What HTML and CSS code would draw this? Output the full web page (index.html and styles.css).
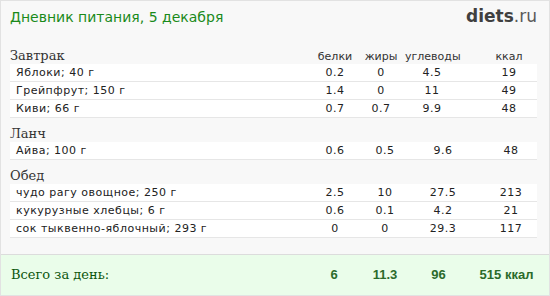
FILE: index.html
```html
<!DOCTYPE html>
<html lang="ru">
<head>
<meta charset="utf-8">
<title>Дневник питания</title>
<link rel="stylesheet" href="styles.css">
</head>
<body>
<div class="page">
  <header class="top">
    <h1 class="title">Дневник питания, 5 декабря</h1>
    <div class="logo"><b>diets</b>.ru</div>
  </header>

  <section class="meal meal-a">
    <div class="grid head">
      <h2 class="meal-name">Завтрак</h2>
      <span class="c">белки</span>
      <span class="c">жиры</span>
      <span class="c">углеводы</span>
      <span class="c k">ккал</span>
    </div>
    <div class="grid row"><span class="n">Яблоки; 40 г</span><span class="c">0.2</span><span class="c">0</span><span class="c">4.5</span><span class="c k">19</span></div>
    <div class="grid row"><span class="n">Грейпфрут; 150 г</span><span class="c">1.4</span><span class="c">0</span><span class="c">11</span><span class="c k">49</span></div>
    <div class="grid row"><span class="n">Киви; 66 г</span><span class="c">0.7</span><span class="c">0.7</span><span class="c">9.9</span><span class="c k">48</span></div>
  </section>

  <section class="meal meal-b">
    <h2 class="meal-name solo">Ланч</h2>
    <div class="grid row"><span class="n">Айва; 100 г</span><span class="c">0.6</span><span class="c">0.5</span><span class="c">9.6</span><span class="c k">48</span></div>
  </section>

  <section class="meal meal-b">
    <h2 class="meal-name solo">Обед</h2>
    <div class="grid row"><span class="n">чудо рагу овощное; 250 г</span><span class="c">2.5</span><span class="c">10</span><span class="c">27.5</span><span class="c k">213</span></div>
    <div class="grid row"><span class="n">кукурузные хлебцы; 6 г</span><span class="c">0.6</span><span class="c">0.1</span><span class="c">4.2</span><span class="c k">21</span></div>
    <div class="grid row"><span class="n">сок тыквенно-яблочный; 293 г</span><span class="c">0</span><span class="c">0</span><span class="c">29.3</span><span class="c k">117</span></div>
  </section>

  <footer class="total">
    <span class="total-label">Всего за день:</span>
    <span class="c">6</span>
    <span class="c">11.3</span>
    <span class="c">96</span>
    <span class="c k">515 ккал</span>
  </footer>
</div>
</body>
</html>
```

FILE: styles.css
```css
* { box-sizing: border-box; }
html, body { margin: 0; padding: 0; }
body {
  width: 550px;
  height: 296px;
  background: #f8f8f8;
  font-family: "DejaVu Sans", Verdana, sans-serif;
  color: #222;
}
.page {
  width: 550px;
  height: 296px;
  border: 1px solid #e2e2e2;
  border-bottom: 0;
  background: #f8f8f8;
  display: flex;
  flex-direction: column;
}
.top {
  display: flex;
  justify-content: space-between;
  align-items: baseline;
  height: 39px;
  padding: 5px 12px 0 9px;
}
.title {
  margin: 0;
  font-family: "DejaVu Sans", Verdana, sans-serif;
  font-weight: normal;
  font-size: 14px;
  line-height: 17px;
  color: #1a8a1a;
}
.logo {
  font-family: "DejaVu Sans", sans-serif;
  font-size: 17px;
  line-height: 20px;
  color: #5a5a5a;
}
.logo b { color: #404040; font-weight: bold; }

.meal { padding: 0 12px 0 9px; }
.grid {
  display: grid;
  grid-template-columns: 1fr 44px 48px 54px 78px;
  align-items: baseline;
}
.meal-b .grid { grid-template-columns: 1fr 44px 56px 60px 64px; }
.meal-a .k { padding-left: 22px; }
.meal-b .k { padding-left: 12px; }

.meal-name {
  margin: 0;
  font-family: "DejaVu Serif", Georgia, serif;
  font-weight: normal;
  font-size: 13px;
  line-height: 16px;
  color: #333;
}
.head {
  height: 24px;
  padding-top: 8px;
  font-size: 11px;
  line-height: 14px;
  color: #333;
}
.solo {
  height: 24px;
  padding-top: 8px;
}
.row {
  height: 18px;
  background: #fff;
  border-bottom: 1px solid #e6e6e6;
  font-size: 11px;
  line-height: 17px;
  letter-spacing: 0.5px;
  color: #222;
}
.n { padding-left: 6px; white-space: nowrap; }
.c { text-align: center; white-space: nowrap; }

.total {
  margin-top: auto;
  height: 42px;
  border-top: 1px solid #dcdcdc;
  border-bottom: 1px solid #e2e2e2;
  background: #eafdea;
  padding: 12px 13px 0 10px;
  display: grid;
  grid-template-columns: 1fr 44px 58px 49px 73px;
  align-items: baseline;
  font-family: "Liberation Sans", Arial, sans-serif;
  font-weight: bold;
  font-size: 13px;
  line-height: 16px;
  color: #2b6b2b;
}
.total .k { padding-left: 14px; }
.total-label {
  font-family: "DejaVu Serif", Georgia, serif;
  font-weight: normal;
  font-size: 13px;
  color: #0d560d;
}
```
